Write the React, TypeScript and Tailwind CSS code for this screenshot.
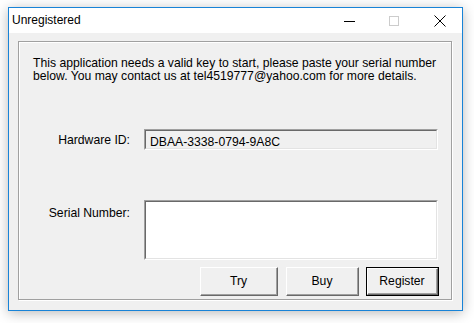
import React from 'react';

const font = { fontFamily: '"Liberation Sans", Arial, sans-serif' };

const Win95Button: React.FC<{ label: string; width: string; isDefault?: boolean }> = ({ label, width, isDefault }) => (
  <button
    type="button"
    className={`${width} h-[29px] ${isDefault ? 'border border-black' : ''} bg-[#f0f0f0] p-0`}
  >
    <div className="h-full w-full border-t border-l border-t-white border-l-white border-r border-b border-r-[#696969] border-b-[#696969]">
      <div className="h-full w-full border-r border-b border-r-[#a0a0a0] border-b-[#a0a0a0] flex items-center justify-center text-[12.2px] text-black">
        {label}
      </div>
    </div>
  </button>
);

const SunkenField: React.FC<{ height: string; bg: string; children?: React.ReactNode }> = ({ height, bg, children }) => (
  <div className={`w-[294px] ${height} border-t border-l border-t-[#a0a0a0] border-l-[#a0a0a0] border-r border-b border-r-white border-b-white`}>
    <div className={`h-full w-full border-t border-l border-t-[#696969] border-l-[#696969] border-r border-b border-r-[#e3e3e3] border-b-[#e3e3e3] ${bg}`}>
      {children}
    </div>
  </div>
);

export default function App() {
  return (
    <div className="w-[474px] h-[323px] bg-white overflow-hidden pt-[7px] pl-[8px]" style={font}>
      <div className="w-[455px] h-[304px] border border-[#1883d7] bg-[#f0f0f0] flex flex-col shadow-[0_2px_12px_rgba(0,0,0,0.28)]">
        {/* title bar */}
        <div className="h-[25px] bg-white flex items-center">
          <span className="pl-[3px] text-[12px] text-black flex-1 leading-none pb-[1px]">Unregistered</span>
          <div className="w-[45px] h-full flex items-center justify-center">
            <div className="w-[11px] h-px bg-black mt-[1px]" />
          </div>
          <div className="w-[45px] h-full flex items-center justify-center">
            <div className="w-[10px] h-[10px] border border-[#cccccc] mr-[2px]" />
          </div>
          <div className="w-[45px] h-full flex items-center justify-center">
            <svg width="12" height="12" viewBox="0 0 12 12">
              <path d="M0.5 0.5 L11.5 11.5 M11.5 0.5 L0.5 11.5" stroke="#000" strokeWidth="1" fill="none" />
            </svg>
          </div>
        </div>

        {/* client */}
        <div className="flex-1 pt-[8px] pl-[9px]">
          <div className="w-[434px] h-[259px] border border-[#a0a0a0] shadow-[inset_1px_1px_0_#ffffff,1px_1px_0_#ffffff] flex flex-col">
            <p className="pl-[14px] pt-[15px] text-[12.2px] leading-[13px] text-black whitespace-nowrap">
              This application needs a valid key to start, please paste your serial number
              <br />
              below. You may contact us at tel4519777@yahoo.com for more details.
            </p>

            <div className="flex mt-[46px]">
              <div className="w-[111px] text-right text-[12.2px] text-black pt-[2px]">Hardware ID:</div>
              <div className="ml-[14px]">
                <SunkenField height="h-[21px]" bg="bg-[#f0f0f0]">
                  <div className="pl-[4px] pt-[2px] text-[12.2px] text-black">DBAA-3338-0794-9A8C</div>
                </SunkenField>
              </div>
            </div>

            <div className="flex mt-[50px]">
              <div className="w-[111px] text-right text-[12.2px] text-black pt-[4px]">Serial Number:</div>
              <div className="ml-[14px]">
                <SunkenField height="h-[60px]" bg="bg-white" />
              </div>
            </div>

            <div className="flex mt-[7px] pl-[181px]">
              <Win95Button label="Try" width="w-[78px]" />
              <div className="w-[8px]" />
              <Win95Button label="Buy" width="w-[73px]" />
              <div className="w-[7px]" />
              <Win95Button label="Register" width="w-[73px]" isDefault />
            </div>
          </div>
        </div>
      </div>
    </div>
  );
}
